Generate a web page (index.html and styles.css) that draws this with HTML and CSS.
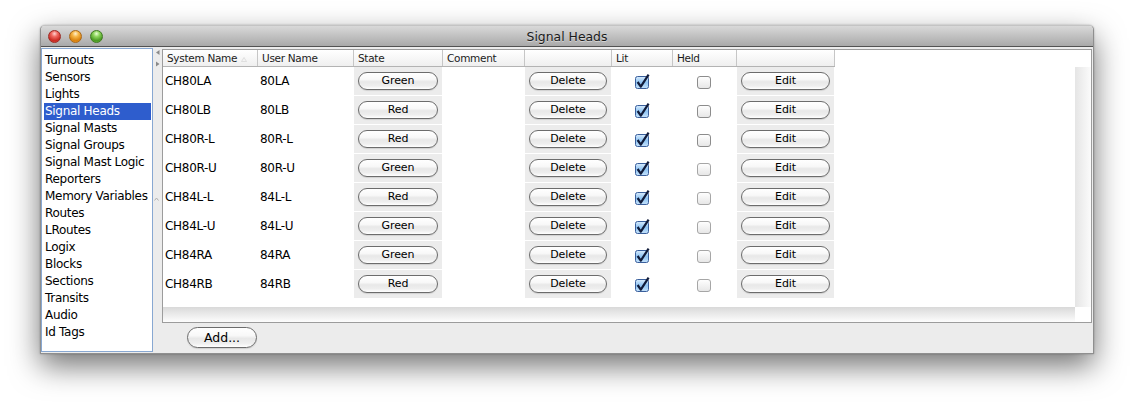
FILE: index.html
```html
<!DOCTYPE html>
<html>
<head>
<meta charset="utf-8">
<title>Signal Heads</title>
<link rel="stylesheet" href="styles.css">
</head>
<body>
<div class="desk">
<div class="window">
  <div class="titlebar">
    <div class="lights">
      <span class="light red"></span>
      <span class="light yellow"></span>
      <span class="light green"></span>
    </div>
    <div class="title">Signal Heads</div>
    <div></div>
  </div>
  <div class="content">
    <ul class="nav">
      <li>Turnouts</li>
      <li>Sensors</li>
      <li>Lights</li>
      <li class="sel">Signal Heads</li>
      <li>Signal Masts</li>
      <li>Signal Groups</li>
      <li>Signal Mast Logic</li>
      <li>Reporters</li>
      <li>Memory Variables</li>
      <li>Routes</li>
      <li>LRoutes</li>
      <li>Logix</li>
      <li>Blocks</li>
      <li>Sections</li>
      <li>Transits</li>
      <li>Audio</li>
      <li>Id Tags</li>
    </ul>
    <div class="divider">
      <svg class="arrows" width="9" height="20" viewBox="0 0 9 20"><path d="M6.5 2 L3 4.5 L6.5 7 Z" fill="#8a8a8a"/><path d="M3 13.5 L6.5 16 L3 18.5 Z" fill="#8a8a8a"/></svg>
      <svg class="grip" width="9" height="6" viewBox="0 0 9 6"><path d="M1.5 4.5 L3.5 2 L5.5 4.5" stroke="#b0b0b0" stroke-width="1" fill="none"/></svg>
    </div>
    <div class="main">
      <div class="scrollpane">
        <div class="viewport">
          <div class="grid thead">
            <div class="th">System Name <svg class="sort" width="6" height="5" viewBox="0 0 6 5"><path d="M0.5 4.5 L3 0.5 L5.5 4.5 Z" fill="#f4f4f4" stroke="#d6d6d6" stroke-width="0.7"/></svg></div>
            <div class="th">User Name</div>
            <div class="th">State</div>
            <div class="th">Comment</div>
            <div class="th"></div>
            <div class="th">Lit</div>
            <div class="th">Held</div>
            <div class="th"></div>
          </div>

          <div class="grid row">
            <div class="td">CH80LA</div><div class="td">80LA</div>
            <div class="td bc"><span class="btn">Green</span></div><div class="td"></div>
            <div class="td bc"><span class="btn">Delete</span></div>
            <div class="td cc"><svg class="cb" width="16" height="16" viewBox="0 0 16 16"><defs><linearGradient id="cbOn" x1="0" y1="0" x2="0" y2="1"><stop offset="0" stop-color="#d9ecfd"/><stop offset="0.5" stop-color="#8fc4f3"/><stop offset="1" stop-color="#c6e3fc"/></linearGradient><linearGradient id="cbOff" x1="0" y1="0" x2="0" y2="1"><stop offset="0" stop-color="#ffffff"/><stop offset="1" stop-color="#e6e6e6"/></linearGradient></defs><rect x="0.5" y="2.5" width="13" height="12" rx="2" fill="url(#cbOn)" stroke="#3a5f9c"/><path d="M2.6 8 L5.8 12.6 L13.6 0.6" stroke="#101b3a" stroke-width="2.2" fill="none" stroke-linejoin="round"/></svg></div>
            <div class="td cc"><svg class="cb" width="16" height="16" viewBox="0 0 16 16"><rect x="0.5" y="2.5" width="13" height="12" rx="2.5" fill="url(#cbOff)" stroke="#8c8c8c"/></svg></div>
            <div class="td bc"><span class="btn">Edit</span></div>
          </div>

          <div class="grid row">
            <div class="td">CH80LB</div><div class="td">80LB</div>
            <div class="td bc"><span class="btn">Red</span></div><div class="td"></div>
            <div class="td bc"><span class="btn">Delete</span></div>
            <div class="td cc"><svg class="cb" width="16" height="16" viewBox="0 0 16 16"><rect x="0.5" y="2.5" width="13" height="12" rx="2" fill="url(#cbOn)" stroke="#3a5f9c"/><path d="M2.6 8 L5.8 12.6 L13.6 0.6" stroke="#101b3a" stroke-width="2.2" fill="none" stroke-linejoin="round"/></svg></div>
            <div class="td cc"><svg class="cb" width="16" height="16" viewBox="0 0 16 16"><rect x="0.5" y="2.5" width="13" height="12" rx="2.5" fill="url(#cbOff)" stroke="#8c8c8c"/></svg></div>
            <div class="td bc"><span class="btn">Edit</span></div>
          </div>

          <div class="grid row">
            <div class="td">CH80R-L</div><div class="td">80R-L</div>
            <div class="td bc"><span class="btn">Red</span></div><div class="td"></div>
            <div class="td bc"><span class="btn">Delete</span></div>
            <div class="td cc"><svg class="cb" width="16" height="16" viewBox="0 0 16 16"><rect x="0.5" y="2.5" width="13" height="12" rx="2" fill="url(#cbOn)" stroke="#3a5f9c"/><path d="M2.6 8 L5.8 12.6 L13.6 0.6" stroke="#101b3a" stroke-width="2.2" fill="none" stroke-linejoin="round"/></svg></div>
            <div class="td cc"><svg class="cb" width="16" height="16" viewBox="0 0 16 16"><rect x="0.5" y="2.5" width="13" height="12" rx="2.5" fill="url(#cbOff)" stroke="#8c8c8c"/></svg></div>
            <div class="td bc"><span class="btn">Edit</span></div>
          </div>

          <div class="grid row">
            <div class="td">CH80R-U</div><div class="td">80R-U</div>
            <div class="td bc"><span class="btn">Green</span></div><div class="td"></div>
            <div class="td bc"><span class="btn">Delete</span></div>
            <div class="td cc"><svg class="cb" width="16" height="16" viewBox="0 0 16 16"><rect x="0.5" y="2.5" width="13" height="12" rx="2" fill="url(#cbOn)" stroke="#3a5f9c"/><path d="M2.6 8 L5.8 12.6 L13.6 0.6" stroke="#101b3a" stroke-width="2.2" fill="none" stroke-linejoin="round"/></svg></div>
            <div class="td cc"><svg class="cb" width="16" height="16" viewBox="0 0 16 16"><rect x="0.5" y="2.5" width="13" height="12" rx="2.5" fill="url(#cbOff)" stroke="#a6a6a6"/></svg></div>
            <div class="td bc"><span class="btn">Edit</span></div>
          </div>

          <div class="grid row">
            <div class="td">CH84L-L</div><div class="td">84L-L</div>
            <div class="td bc"><span class="btn">Red</span></div><div class="td"></div>
            <div class="td bc"><span class="btn">Delete</span></div>
            <div class="td cc"><svg class="cb" width="16" height="16" viewBox="0 0 16 16"><rect x="0.5" y="2.5" width="13" height="12" rx="2" fill="url(#cbOn)" stroke="#3a5f9c"/><path d="M2.6 8 L5.8 12.6 L13.6 0.6" stroke="#101b3a" stroke-width="2.2" fill="none" stroke-linejoin="round"/></svg></div>
            <div class="td cc"><svg class="cb" width="16" height="16" viewBox="0 0 16 16"><rect x="0.5" y="2.5" width="13" height="12" rx="2.5" fill="url(#cbOff)" stroke="#a6a6a6"/></svg></div>
            <div class="td bc"><span class="btn">Edit</span></div>
          </div>

          <div class="grid row">
            <div class="td">CH84L-U</div><div class="td">84L-U</div>
            <div class="td bc"><span class="btn">Green</span></div><div class="td"></div>
            <div class="td bc"><span class="btn">Delete</span></div>
            <div class="td cc"><svg class="cb" width="16" height="16" viewBox="0 0 16 16"><rect x="0.5" y="2.5" width="13" height="12" rx="2" fill="url(#cbOn)" stroke="#3a5f9c"/><path d="M2.6 8 L5.8 12.6 L13.6 0.6" stroke="#101b3a" stroke-width="2.2" fill="none" stroke-linejoin="round"/></svg></div>
            <div class="td cc"><svg class="cb" width="16" height="16" viewBox="0 0 16 16"><rect x="0.5" y="2.5" width="13" height="12" rx="2.5" fill="url(#cbOff)" stroke="#a6a6a6"/></svg></div>
            <div class="td bc"><span class="btn">Edit</span></div>
          </div>

          <div class="grid row">
            <div class="td">CH84RA</div><div class="td">84RA</div>
            <div class="td bc"><span class="btn">Green</span></div><div class="td"></div>
            <div class="td bc"><span class="btn">Delete</span></div>
            <div class="td cc"><svg class="cb" width="16" height="16" viewBox="0 0 16 16"><rect x="0.5" y="2.5" width="13" height="12" rx="2" fill="url(#cbOn)" stroke="#3a5f9c"/><path d="M2.6 8 L5.8 12.6 L13.6 0.6" stroke="#101b3a" stroke-width="2.2" fill="none" stroke-linejoin="round"/></svg></div>
            <div class="td cc"><svg class="cb" width="16" height="16" viewBox="0 0 16 16"><rect x="0.5" y="2.5" width="13" height="12" rx="2.5" fill="url(#cbOff)" stroke="#a6a6a6"/></svg></div>
            <div class="td bc"><span class="btn">Edit</span></div>
          </div>

          <div class="grid row">
            <div class="td">CH84RB</div><div class="td">84RB</div>
            <div class="td bc"><span class="btn">Red</span></div><div class="td"></div>
            <div class="td bc"><span class="btn">Delete</span></div>
            <div class="td cc"><svg class="cb" width="16" height="16" viewBox="0 0 16 16"><rect x="0.5" y="2.5" width="13" height="12" rx="2" fill="url(#cbOn)" stroke="#3a5f9c"/><path d="M2.6 8 L5.8 12.6 L13.6 0.6" stroke="#101b3a" stroke-width="2.2" fill="none" stroke-linejoin="round"/></svg></div>
            <div class="td cc"><svg class="cb" width="16" height="16" viewBox="0 0 16 16"><rect x="0.5" y="2.5" width="13" height="12" rx="2.5" fill="url(#cbOff)" stroke="#a6a6a6"/></svg></div>
            <div class="td bc"><span class="btn">Edit</span></div>
          </div>
        </div>
        <div class="vstrip"></div>
        <div class="hstrip"></div>
        <div class="corner"></div>
      </div>
      <div class="bottombar">
        <span class="btn add">Add...</span>
      </div>
    </div>
  </div>
</div>
</div>
</body>
</html>
```

FILE: styles.css
```css
html, body {
  margin: 0;
  background: #ffffff;
  font-family: "DejaVu Sans", "Liberation Sans", sans-serif;
  color: #000;
}

.desk {
  width: 1134px;
  height: 410px;
  box-sizing: border-box;
  padding: 25px 0 0 40px;
  background: #ffffff;
}

.window {
  width: 1054px;
  height: 329px;
  box-sizing: border-box;
  border: 1px solid #8f8f8f;
  border-top-color: #c4c4c4;
  border-radius: 5px 5px 0 0;
  background: #ececec;
  box-shadow: 0 12px 30px rgba(0, 0, 0, 0.55), 0 0 2px rgba(0, 0, 0, 0.3);
  display: flex;
  flex-direction: column;
}

/* title bar */
.titlebar {
  height: 21px;
  flex: none;
  box-sizing: border-box;
  border-bottom: 1px solid #525252;
  border-radius: 4px 4px 0 0;
  background: linear-gradient(#d9d9d9, #a9a9a9);
  display: grid;
  grid-template-columns: 1fr auto 1fr;
  align-items: center;
}

.lights {
  display: flex;
  gap: 8px;
  padding-left: 7px;
}

.light {
  width: 13px;
  height: 13px;
  border-radius: 50%;
  box-sizing: border-box;
}

.light.red {
  background: radial-gradient(circle at 50% 25%, #ffd3d0 0, #f06a62 30%, #c92a22 70%, #e8544c 100%);
  border: 1px solid #9c2a24;
}

.light.yellow {
  background: radial-gradient(circle at 50% 25%, #fff1cf 0, #f7b84a 30%, #d9820e 70%, #f3a43a 100%);
  border: 1px solid #a8681a;
}

.light.green {
  background: radial-gradient(circle at 50% 25%, #eaffd6 0, #8fd65e 30%, #4a9a22 70%, #78c84b 100%);
  border: 1px solid #3f7a22;
}

.title {
  font-size: 12.4px;
  color: #1a1a1a;
  text-shadow: 0 1px 0 rgba(255, 255, 255, 0.45);
}

/* content */
.content {
  flex: 1;
  min-height: 0;
  display: flex;
  padding: 1px 1px 1px 0;
}

.nav {
  list-style: none;
  margin: 0;
  padding: 3px 1px 0 2px;
  width: 112px;
  flex: none;
  box-sizing: border-box;
  border: 1px solid #88a8d2;
  background: #fff;
}

.nav li {
  height: 17px;
  line-height: 17px;
  padding-left: 1px;
  font-size: 12px;
  letter-spacing: -0.3px;
  white-space: nowrap;
}

.nav li.sel {
  background: #2e5dcd;
  color: #fff;
}

.divider {
  width: 9px;
  flex: none;
  display: flex;
  flex-direction: column;
}

.arrows {
  display: block;
}

.grip {
  display: block;
  margin-top: 128px;
}

.main {
  flex: 1;
  display: flex;
  flex-direction: column;
  padding-top: 1px;
}

.scrollpane {
  height: 274px;
  flex: none;
  box-sizing: border-box;
  border: 1px solid #9c9c9c;
  background: #fff;
  display: grid;
  grid-template-columns: 1fr 16px;
  grid-template-rows: 1fr 15px;
}

.viewport {
  overflow: hidden;
}

.grid {
  display: grid;
  grid-template-columns: 95px 96px 89px 82px 87px 61px 64px 98px;
  width: 672px;
}

.thead {
  height: 17px;
  box-sizing: border-box;
  border-bottom: 1px solid #b3b3b3;
  background: linear-gradient(#ffffff, #efefef);
}

.th {
  font-size: 10.5px;
  letter-spacing: -0.3px;
  line-height: 16px;
  padding-left: 4px;
  border-right: 1px solid #c6c6c6;
  color: #1c1c1c;
  white-space: nowrap;
  overflow: hidden;
}

.sort {
  margin-left: 1px;
  vertical-align: 0;
}

.row {
  height: 29px;
}

.td {
  font-size: 12px;
  letter-spacing: -0.3px;
  line-height: 28px;
  padding-left: 2px;
  white-space: nowrap;
  overflow: hidden;
}

.td.bc {
  background: #ececec;
  border-right: 1px solid #fff;
  border-bottom: 1px solid #fff;
  box-sizing: border-box;
  padding: 0 4px;
  display: flex;
  align-items: center;
}

.td.cc {
  padding: 0;
  display: flex;
  justify-content: center;
  align-items: center;
}

.cb {
  display: block;
}

.btn {
  display: block;
  width: 100%;
  height: 18px;
  box-sizing: border-box;
  border: 1px solid #6c6c6c;
  border-radius: 9px;
  background: linear-gradient(#ffffff 0%, #f8f8f8 40%, #e8e8e8 55%, #eeeeee 80%, #ffffff 100%);
  box-shadow: 0 1px 1px rgba(0, 0, 0, 0.12);
  font-size: 11px;
  letter-spacing: -0.1px;
  line-height: 16px;
  text-align: center;
  color: #000;
}

.vstrip {
  margin-top: 17px;
  background: linear-gradient(to right, #e5e5e5, #fbfbfb);
}

.hstrip {
  background: linear-gradient(#d9d9d9, #fdfdfd);
}

.corner {
  background: #fff;
}

.bottombar {
  flex: 1;
  padding: 4px 0 0 25px;
}

.btn.add {
  width: 70px;
  height: 21px;
  border-radius: 11px;
  font-size: 12.5px;
  line-height: 19px;
  letter-spacing: 0;
}
```
